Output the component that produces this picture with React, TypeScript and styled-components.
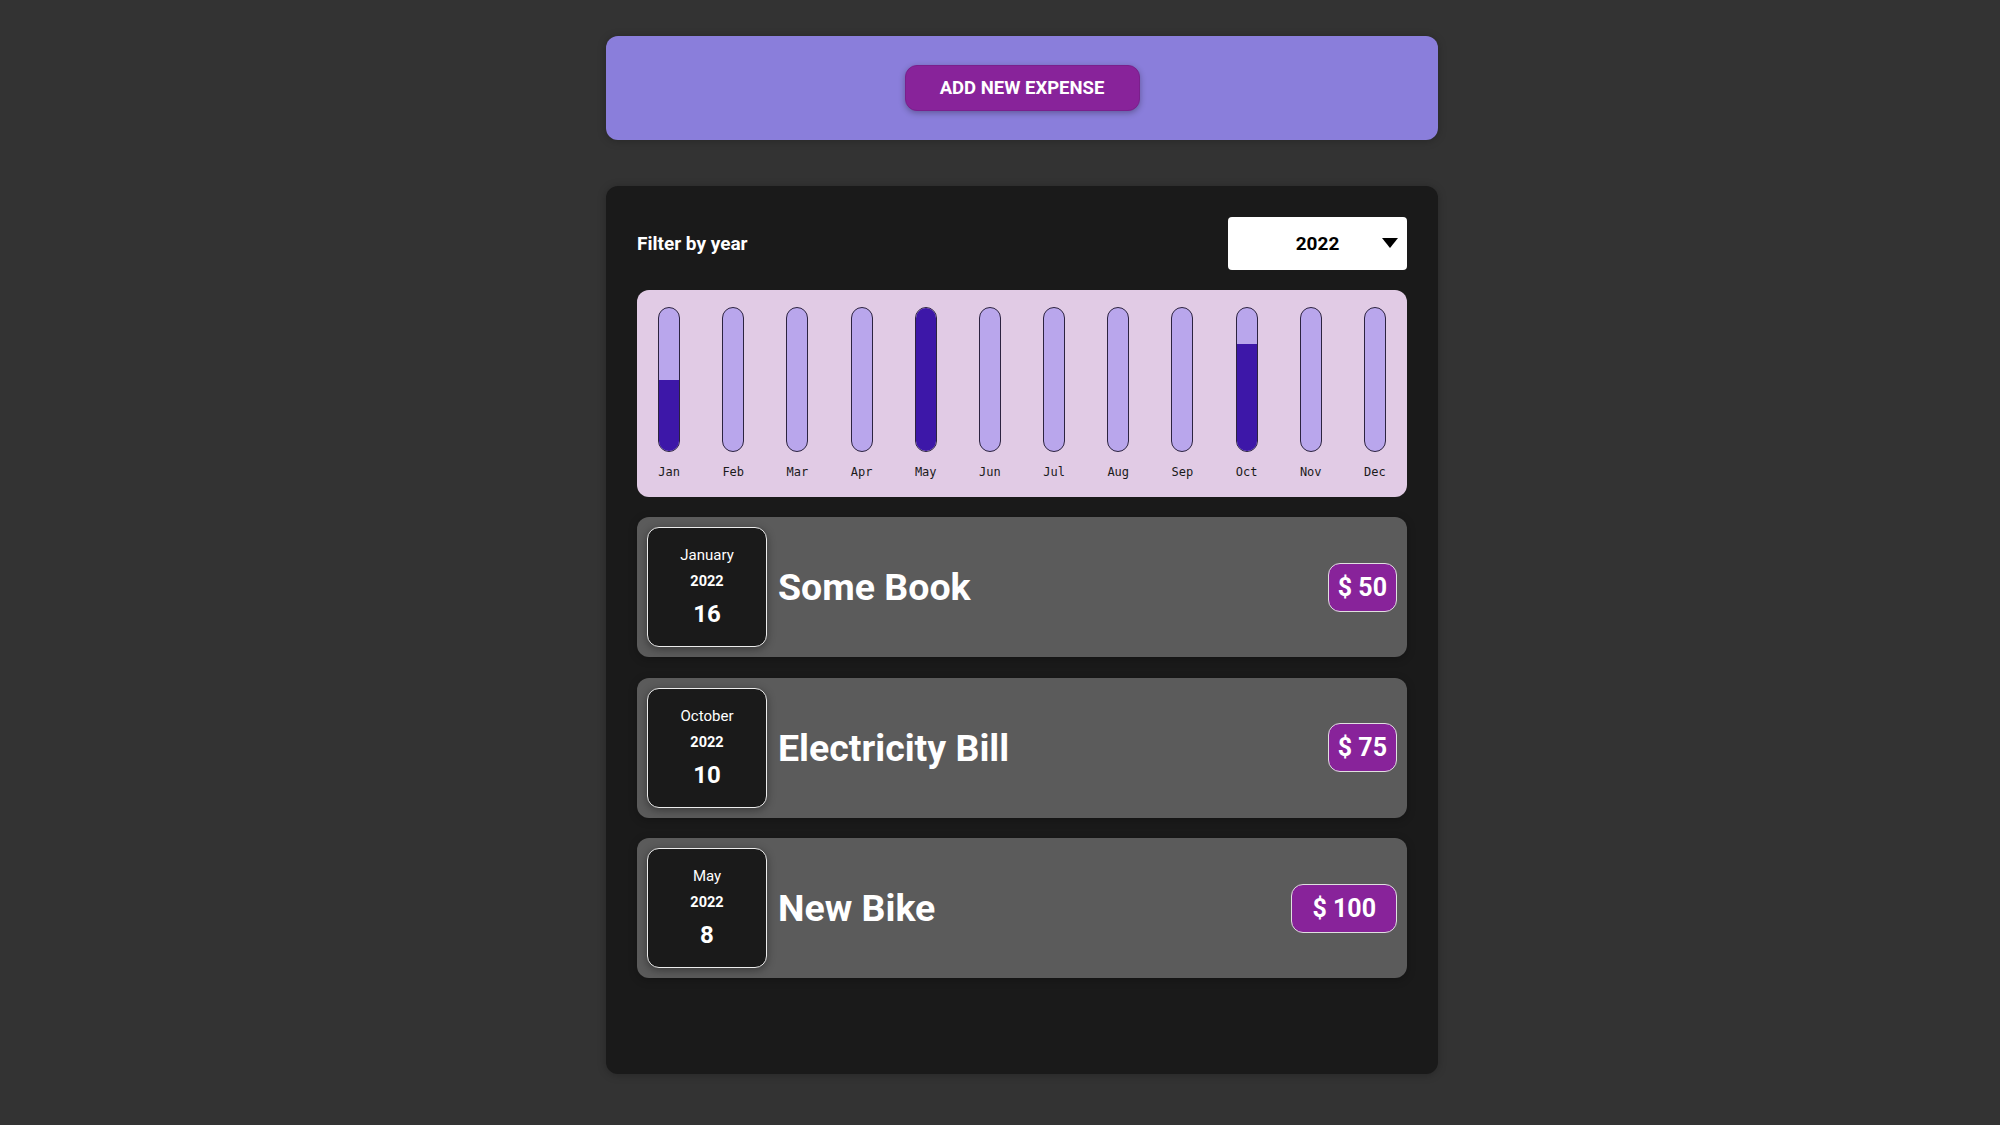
import React from "react";
import styled, { createGlobalStyle } from "styled-components";

const GlobalStyle = createGlobalStyle`
  html, body {
    margin: 0;
    padding: 0;
    background: #333333;
    font-family: Roboto, "Liberation Sans", Arial, sans-serif;
  }
  * { box-sizing: border-box; }
`;

const Page = styled.div`
  padding: 36px 0 40px 44px;
  min-height: 1125px;
`;

const Column = styled.div`
  width: 832px;
  margin: 0 auto;
  display: flex;
  flex-direction: column;
  gap: 46px;
`;

const NewExpenseCard = styled.section`
  background: #8a7edb;
  border-radius: 12px;
  height: 104px;
  display: flex;
  align-items: center;
  justify-content: center;
  box-shadow: 0 1px 8px rgba(0, 0, 0, 0.25);
`;

const AddButton = styled.button`
  font-family: Roboto, "Liberation Sans", Arial, sans-serif;
  font-size: 18.5px;
  font-weight: 700;
  color: #ffffff;
  background: #88239a;
  border: 1px solid #7a1f8c;
  border-radius: 12px;
  width: 235px;
  height: 46px;
  text-transform: uppercase;
  box-shadow: 0 2px 6px rgba(0, 0, 0, 0.3);
  cursor: pointer;
`;

const ExpensesCard = styled.section`
  background: #1a1a1a;
  border-radius: 12px;
  padding: 31px 31px 96px 31px;
  display: flex;
  flex-direction: column;
  box-shadow: 0 1px 8px rgba(0, 0, 0, 0.25);
`;

const FilterRow = styled.div`
  display: flex;
  align-items: center;
  justify-content: space-between;
  height: 53px;
`;

const FilterLabel = styled.label`
  color: #ffffff;
  font-size: 19px;
  font-weight: 700;
`;

const SelectWrap = styled.div`
  position: relative;
  width: 179px;
  height: 53px;
`;

const YearSelect = styled.select`
  appearance: none;
  -webkit-appearance: none;
  width: 100%;
  height: 100%;
  border: none;
  border-radius: 4px;
  background: #ffffff;
  font-family: Roboto, "Liberation Sans", Arial, sans-serif;
  font-size: 19px;
  font-weight: 700;
  color: #000;
  text-align: center;
  text-align-last: center;
  padding: 0;
`;

const Caret = styled.span`
  position: absolute;
  right: 9px;
  top: 21px;
  width: 0;
  height: 0;
  border-left: 8px solid transparent;
  border-right: 8px solid transparent;
  border-top: 10px solid #000;
  pointer-events: none;
`;

const Chart = styled.div`
  margin-top: 20px;
  background: #e1cbe5;
  border-radius: 12px;
  height: 207px;
  padding-top: 17px;
  display: grid;
  grid-template-columns: repeat(12, 1fr);
`;

const BarColumn = styled.div`
  display: flex;
  flex-direction: column;
  align-items: center;
`;

const BarTrack = styled.div`
  width: 22px;
  height: 145px;
  border: 1px solid #2c2340;
  border-radius: 11px;
  background: #b9a6ec;
  overflow: hidden;
  display: flex;
  flex-direction: column;
  justify-content: flex-end;
`;

const BarFill = styled.div`
  width: 100%;
  background: #3d17a8;
`;

const BarLabel = styled.div`
  margin-top: 13px;
  font-family: "DejaVu Sans Mono", "Liberation Mono", monospace;
  font-size: 12px;
  color: #1a1a1a;
`;

const ItemList = styled.ul`
  list-style: none;
  margin: 20px 0 0 0;
  padding: 0;
  display: flex;
  flex-direction: column;
  gap: 20.5px;
`;

const Item = styled.li`
  background: #5b5b5b;
  border-radius: 12px;
  height: 140px;
  padding: 10px;
  display: flex;
  align-items: center;
  box-shadow: 0 2px 8px rgba(0, 0, 0, 0.25);
`;

const DateBox = styled.div`
  width: 120px;
  height: 120px;
  flex-shrink: 0;
  background: #1a1a1a;
  border: 1px solid #ececec;
  border-radius: 12px;
  color: #ffffff;
  display: flex;
  flex-direction: column;
  align-items: center;
  justify-content: center;
  gap: 9px;
  box-shadow: 0 2px 8px rgba(0, 0, 0, 0.4);
`;

const DateMonth = styled.div`
  font-size: 15px;
  line-height: 18px;
  font-weight: 400;
`;

const DateYear = styled.div`
  font-size: 14.5px;
  line-height: 18px;
  font-weight: 700;
`;

const DateDay = styled.div`
  font-size: 24px;
  line-height: 28px;
  font-weight: 700;
`;

const Title = styled.h2`
  flex: 1;
  margin: 0 0 0 11px;
  color: #ffffff;
  font-size: 37.5px;
  font-weight: 700;
`;

const Price = styled.div<{ $pad: number }>`
  height: 49px;
  padding: 0 ${(p) => p.$pad}px;
  display: flex;
  align-items: center;
  background: #88239a;
  border: 1px solid #e0e0e0;
  border-radius: 12px;
  color: #ffffff;
  font-size: 25px;
  font-weight: 700;
`;

const months = ["Jan", "Feb", "Mar", "Apr", "May", "Jun", "Jul", "Aug", "Sep", "Oct", "Nov", "Dec"];

const expenses = [
  { id: 1, title: "Some Book", amount: 50, month: "January", year: 2022, day: 16, m: 0, pad: 9 },
  { id: 2, title: "Electricity Bill", amount: 75, month: "October", year: 2022, day: 10, m: 9, pad: 9 },
  { id: 3, title: "New Bike", amount: 100, month: "May", year: 2022, day: 8, m: 4, pad: 20 },
];

export default function App() {
  const totals = months.map((_, i) =>
    expenses.filter((e) => e.m === i).reduce((s, e) => s + e.amount, 0)
  );
  const max = Math.max(...totals);

  return (
    <Page>
      <GlobalStyle />
      <Column>
        <NewExpenseCard>
          <AddButton>Add New Expense</AddButton>
        </NewExpenseCard>
        <ExpensesCard>
          <FilterRow>
            <FilterLabel>Filter by year</FilterLabel>
            <SelectWrap>
              <YearSelect defaultValue="2022">
                <option value="2022">2022</option>
                <option value="2021">2021</option>
                <option value="2020">2020</option>
                <option value="2019">2019</option>
              </YearSelect>
              <Caret />
            </SelectWrap>
          </FilterRow>
          <Chart>
            {months.map((m, i) => (
              <BarColumn key={m}>
                <BarTrack>
                  <BarFill style={{ height: `${max ? (totals[i] / max) * 100 : 0}%` }} />
                </BarTrack>
                <BarLabel>{m}</BarLabel>
              </BarColumn>
            ))}
          </Chart>
          <ItemList>
            {expenses.map((e) => (
              <Item key={e.id}>
                <DateBox>
                  <DateMonth>{e.month}</DateMonth>
                  <DateYear>{e.year}</DateYear>
                  <DateDay>{e.day}</DateDay>
                </DateBox>
                <Title>{e.title}</Title>
                <Price $pad={e.pad}>$ {e.amount}</Price>
              </Item>
            ))}
          </ItemList>
        </ExpensesCard>
      </Column>
    </Page>
  );
}
